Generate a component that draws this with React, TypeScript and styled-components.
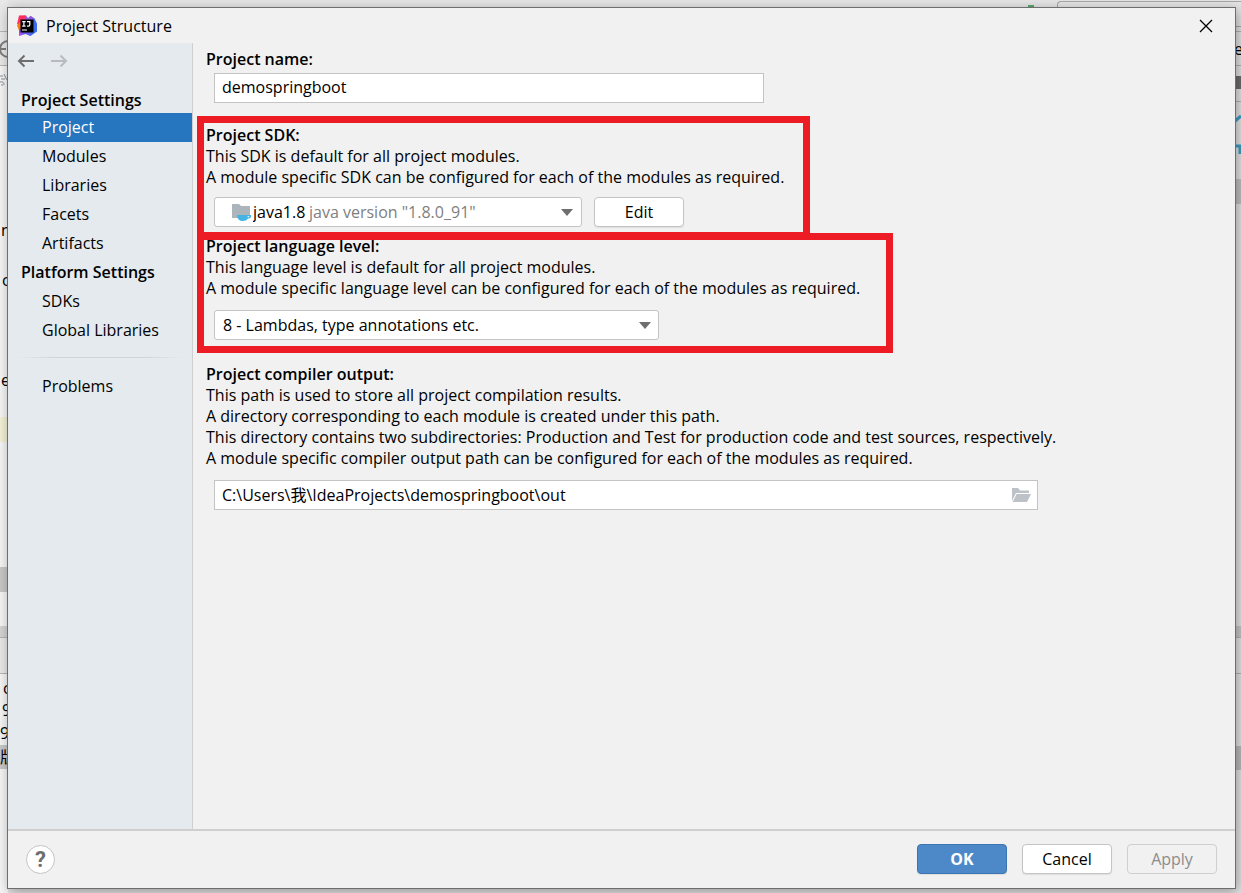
import React from 'react';
import styled, { createGlobalStyle, css } from 'styled-components';

const GlobalStyle = createGlobalStyle`
  * { box-sizing: border-box; }
  body { margin: 0; }
  body, button, input, select {
    font-family: "Open Sans", "Noto Sans CJK SC", sans-serif;
    font-size: 16px;
    color: #000;
  }
`;

const Desktop = styled.div`
  position: relative;
  display: flex;
  min-height: 100vh;
  padding: 7px 5px 4px 7px;
  background: #e6e6e6;
  overflow: hidden;
`;

/* The IDE window that stays visible behind the dialog's edges */
const Backdrop = styled.div`
  position: absolute;
  inset: 0;
  display: flex;
  justify-content: space-between;
`;

const BackTop = styled.div`
  position: absolute;
  top: 1px;
  right: 0;
  width: 184px;
  height: 26px;
  border: 1px solid #a8a8a8;
  border-right: 0;
  border-radius: 4px 0 0 4px;
`;

const RunMark = styled.div`
  position: absolute;
  top: 5px;
  left: 1028px;
  width: 6px;
  height: 3px;
  background: #59a869;
`;

const Strip = styled.div<{ $tone: string }>`
  display: flex;
  flex-direction: column;
  width: 8px;
  background: ${p => p.$tone};
`;

const Slab = styled.div<{ $h: number; $bg?: string; $line?: boolean; $ink?: string; $pad?: number }>`
  display: flex;
  flex: none;
  align-items: center;
  height: ${p => p.$h}px;
  padding-left: ${p => p.$pad || 0}px;
  line-height: 20px;
  white-space: nowrap;
  color: ${p => p.$ink || '#000'};
  background: ${p => p.$bg || 'transparent'};
  border-bottom: ${p => (p.$line ? '1px solid #b5b5b5' : '0')};

  svg { flex: none; }
`;

const Dialog = styled.div`
  position: relative;
  display: flex;
  flex: 1;
  flex-direction: column;
  min-width: 0;
  border: 1px solid #6e6e6e;
  background: #f1f1f1;
  box-shadow: 2px 3px 12px rgba(0, 0, 0, 0.35);
`;

const TitleBar = styled.header`
  display: flex;
  align-items: center;
  height: 35px;
  padding: 0 20px 0 8px;
`;

const Title = styled.h1`
  flex: 1;
  margin: 0 0 0 8px;
  font-size: 16px;
  font-weight: 400;
  line-height: 20px;
`;

const IconButton = styled.button`
  display: flex;
  align-items: center;
  justify-content: center;
  padding: 0;
  border: 0;
  background: transparent;
`;

const Body = styled.div`
  display: flex;
  flex: 1;
`;

const Sidebar = styled.nav`
  flex: none;
  width: 185px;
  border-right: 1px solid #cfcfcf;
  background: #e5eaee;
`;

const History = styled.div`
  display: flex;
  gap: 15px;
  height: 36px;
  padding-left: 9px;
  align-items: center;
`;

const GroupTitle = styled.h2<{ $first?: boolean }>`
  margin: ${p => (p.$first ? '8px' : '0')} 0 0;
  padding-left: 13px;
  font-size: 16px;
  font-weight: 600;
  line-height: ${p => (p.$first ? '26px' : '29px')};
`;

const NavItem = styled.a<{ $active?: boolean }>`
  display: block;
  padding-left: 34px;
  line-height: 29px;
  text-decoration: none;
  color: ${p => (p.$active ? '#fff' : '#000')};
  background: ${p => (p.$active ? '#2675bf' : 'transparent')};
`;

const Divider = styled.hr`
  height: 1px;
  margin: 12px 8px 14px;
  border: 0;
  background: linear-gradient(90deg, transparent, #d0d4d8 25%, #d0d4d8 75%, transparent);
`;

const Main = styled.main`
  display: flex;
  flex: 1;
  flex-direction: column;
  min-width: 0;
  padding: 6px 13px;
`;

const Section = styled.section<{ $after?: number }>`
  position: relative;
  margin-bottom: ${p => p.$after || 0}px;
  line-height: 21px;
`;

const SectionTitle = styled.label`
  display: block;
  font-weight: 600;
`;

const Line = styled.p`
  margin: 0;
`;

const Controls = styled.div<{ $gap: number }>`
  display: flex;
  gap: 12px;
  margin-top: ${p => p.$gap}px;
  padding-left: 8px;
`;

/* Red marker drawn on top of a section */
const Marker = styled.div<{ $w: number; $top: number; $bottom: number }>`
  position: absolute;
  top: ${p => p.$top}px;
  bottom: ${p => p.$bottom}px;
  left: -9px;
  width: ${p => p.$w}px;
  border: 7px solid #ed1c24;
  pointer-events: none;
`;

const Field = styled.div<{ $w: number }>`
  position: relative;
  display: flex;
  width: ${p => p.$w}px;
  height: 30px;
`;

const TextInput = styled.input`
  width: 100%;
  height: 100%;
  padding: 0 36px 2px 7px;
  border: 1px solid #c4c4c4;
  border-radius: 0;
  background: #fff;
  outline: 0;
`;

const Select = styled.select<{ $icon?: boolean }>`
  appearance: none;
  width: 100%;
  height: 100%;
  padding: 0 32px 0 ${p => (p.$icon ? 38 : 8)}px;
  border: 1px solid #c4c4c4;
  border-radius: 3px;
  background: #fff;
  outline: 0;
`;

const Overlay = styled.div<{ $left?: number; $right?: number }>`
  position: absolute;
  top: 0;
  bottom: 0;
  ${p => (p.$left !== undefined ? css`left: ${p.$left}px;` : css`right: ${p.$right}px;`)}
  display: flex;
  align-items: center;
  color: #808080;
  white-space: nowrap;
  pointer-events: none;
`;

const Button = styled.button<{ $kind?: 'primary' | 'disabled' }>`
  width: 90px;
  height: 30px;
  padding: 0;
  border: 1px solid #c4c4c4;
  border-radius: 4px;
  background: #fff;
  box-shadow: 0 1px 1px rgba(0, 0, 0, 0.08);
  ${p => p.$kind === 'primary' && css`
    border-color: #3d75b2;
    background: #4d89c9;
    color: #fff;
    font-weight: 700;
  `}
  ${p => p.$kind === 'disabled' && css`
    border-color: #cfcfcf;
    background: #f1f1f1;
    color: #8c8c8c;
    box-shadow: none;
  `}
`;

const Footer = styled.footer`
  display: flex;
  align-items: center;
  gap: 15px;
  height: 59px;
  padding: 0 18px 1px;
  border-top: 2px solid #cfcfcf;
`;

const HelpButton = styled.button`
  display: flex;
  align-items: center;
  justify-content: center;
  width: 29px;
  height: 29px;
  margin-right: auto;
  padding: 0;
  border: 1px solid #c4c4c4;
  border-radius: 50%;
  background: #fff;
  color: #6e6e6e;
  font-family: Roboto, sans-serif;
  font-size: 22px;
  font-weight: 700;
`;

const Logo = () => (
  <svg width="22" height="22" viewBox="0 0 22 22" aria-hidden="true">
    <path d="M3 .5 9.500 .2 12 4v8H3L1.200 8.500z" fill="#fe315d" />
    <path d="M1 10.500 4 7l2 9-3-.5z" fill="#f97a12" />
    <path d="M3 13.500 9 15l-2.500 5L3 21z" fill="#a84af0" />
    <path d="M12 5 14 1l4.500 2.500L21 8.500v8L14.500 21 9 18z" fill="#3b6cf0" />
    <path d="M9.500 .2 12 3l3-2 3.500 2.500-3 4-6-1z" fill="#8f57e0" />
    <path d="M6 16h8l.5 5-5-2-3 1z" fill="#6a5cf0" />
    <rect x="4.500" y="4.500" width="13" height="13" fill="#000" />
    <path d="M6.200 6.600h3.400M7.900 6.600v4.600M6.200 11.200h3.400M11 6.600h2.800v3.200q0 1.400-1.300 1.400H11" fill="none" stroke="#fff" strokeWidth="1.200" />
    <path d="M6 15h5" stroke="#fff" strokeWidth="1" />
  </svg>
);

const Arrow = ({ flip, color }: { flip?: boolean; color: string }) => (
  <svg width="18" height="14" viewBox="0 0 18 14" aria-hidden="true">
    <path
      d={flip ? 'M1 7h15M10.500 1.500 16 7l-5.500 5.500' : 'M17 7H2M7.500 1.500 2 7l5.500 5.500'}
      fill="none" stroke={color} strokeWidth="2"
    />
  </svg>
);

const Triangle = () => (
  <svg width="12" height="7" viewBox="0 0 12 7" aria-hidden="true">
    <path d="M0 0h12L6 7z" fill="#6e6e6e" />
  </svg>
);

const SdkIcon = () => (
  <svg width="20" height="18" viewBox="0 0 20 18" aria-hidden="true">
    <path d="M0 1h7l2 2h9v9H6v3H0z" fill="#adb5bc" />
    <path d="M5 12h14v1.500q0 2-3 2-1.500 2.500-5.500 2.500Q5.500 18 5 12z" fill="#45b4e3" />
    <path d="M15.500 13.200h2q.3 1-1.600 1.200z" fill="#fff" />
  </svg>
);

const FolderIcon = () => (
  <svg width="20" height="15" viewBox="0 0 20 15" aria-hidden="true">
    <path d="M0 0h6l2 2.500h9V5H4L0 13z" fill="#bcc2c7" />
    <path d="M4.600 6H19l-4 8H0.600z" fill="#bcc2c7" />
  </svg>
);

const TargetIcon = () => (
  <svg width="16" height="18" viewBox="0 0 16 18" aria-hidden="true">
    <path d="M8 1a8 8 0 1 0 0 16 8 8 0 1 0 0-16M0 9h6M8 1v5M8 12v5" fill="none" stroke="#7d7d7d" strokeWidth="2" />
  </svg>
);

const BranchIcon = () => (
  <svg width="12" height="16" viewBox="0 0 12 16" aria-hidden="true">
    <path d="M0 4h3M1 7h4M0 10q4-1 4 3M4 2l3 6M1 13h2" fill="none" stroke="#8a8f96" strokeWidth="1" />
  </svg>
);

const EdgeIcon = ({ d }: { d: string }) => (
  <svg width="8" height="12" viewBox="0 0 8 12" aria-hidden="true">
    <path d={d} fill="none" stroke="#3e9fc4" strokeWidth="3" />
  </svg>
);

const settings = ['Modules', 'Libraries', 'Facets', 'Artifacts'];

export default function App() {
  return (
    <Desktop>
      <GlobalStyle />
      <Backdrop aria-hidden="true">
        <Strip $tone="#f6f6f6">
          <Slab $h={32} $bg="#e9e9e9" $line />
          <Slab $h={34} $bg="#e9e9e9" $line><TargetIcon /></Slab>
          <Slab $h={28}><BranchIcon /></Slab>
          <Slab $h={126} />
          <Slab $h={20} $pad={1}>n</Slab>
          <Slab $h={30} />
          <Slab $h={20} $pad={2}>c</Slab>
          <Slab $h={80} />
          <Slab $h={20} $pad={1}>e</Slab>
          <Slab $h={27} />
          <Slab $h={25} $bg="#f3f2d6" />
          <Slab $h={125} />
          <Slab $h={25} $bg="#c8c8c8" />
          <Slab $h={34} />
          <Slab $h={12} $bg="#d4d4d4" $line />
          <Slab $h={36} $bg="#e9e9e9" $line />
          <Slab $h={3} />
          <Slab $h={22} $pad={3}>c</Slab>
          <Slab $h={22} $pad={2}>9</Slab>
          <Slab $h={24}>9</Slab>
          <Slab $h={24} $bg="#c8c8c8">版</Slab>
        </Strip>
        <BackTop />
        <RunMark />
        <Strip $tone="#e6e6e6">
          <Slab $h={32} $line />
          <Slab $h={34} $line $pad={1}>e</Slab>
          <Slab $h={10} />
          <Slab $h={13} $bg="#6e6e6e" />
          <Slab $h={13} $line />
          <Slab $h={9} />
          <Slab $h={12}><EdgeIcon d="M1 11 8 5" /></Slab>
          <Slab $h={20} />
          <Slab $h={12}><EdgeIcon d="M3 3h4v8" /></Slab>
          <Slab $h={24} />
          <Slab $h={25} $bg="#c2c2c2" />
          <Slab $h={422} />
          <Slab $h={12} $bg="#cacaca" $line />
          <Slab $h={36} $line />
          <Slab $h={72} />
          <Slab $h={24} $bg="#bebebe" />
        </Strip>
      </Backdrop>

      <Dialog role="dialog" aria-label="Project Structure">
        <TitleBar>
          <Logo />
          <Title>Project Structure</Title>
          <IconButton aria-label="Close">
            <svg width="18" height="14" viewBox="0 0 18 14" aria-hidden="true">
              <path d="M3 1l12 12M15 1 3 13" stroke="#000" strokeWidth="1.300" />
            </svg>
          </IconButton>
        </TitleBar>

        <Body>
          <Sidebar>
            <History>
              <IconButton aria-label="Back"><Arrow color="#6e6e6e" /></IconButton>
              <IconButton aria-label="Forward" disabled><Arrow flip color="#b9bcbf" /></IconButton>
            </History>
            <GroupTitle $first>Project Settings</GroupTitle>
            <NavItem href="#project" $active>Project</NavItem>
            {settings.map(name => (
              <NavItem key={name} href={`#${name.toLowerCase()}`}>{name}</NavItem>
            ))}
            <GroupTitle>Platform Settings</GroupTitle>
            <NavItem href="#sdks">SDKs</NavItem>
            <NavItem href="#global-libraries">Global Libraries</NavItem>
            <Divider />
            <NavItem href="#problems">Problems</NavItem>
          </Sidebar>

          <Main>
            <Section $after={22}>
              <SectionTitle htmlFor="name">Project name:</SectionTitle>
              <Controls $gap={3}>
                <Field $w={550}><TextInput id="name" defaultValue="demospringboot" /></Field>
              </Controls>
            </Section>

            <Section $after={9}>
              <SectionTitle htmlFor="sdk">Project SDK:</SectionTitle>
              <Line>This SDK is default for all project modules.</Line>
              <Line>A module specific SDK can be configured for each of the modules as required.</Line>
              <Controls $gap={9}>
                <Field $w={368}>
                  <Select id="sdk" $icon><option>java1.8</option></Select>
                  <Overlay $left={18}><SdkIcon /></Overlay>
                  <Overlay $left={95}>java version "1.8.0_91"</Overlay>
                  <Overlay $right={9}><Triangle /></Overlay>
                </Field>
                <Button>Edit</Button>
              </Controls>
              <Marker $w={613} $top={-9} $bottom={-12} />
            </Section>

            <Section $after={24}>
              <SectionTitle htmlFor="level">Project language level:</SectionTitle>
              <Line>This language level is default for all project modules.</Line>
              <Line>A module specific language level can be configured for each of the modules as required.</Line>
              <Controls $gap={11}>
                <Field $w={445}>
                  <Select id="level"><option>8 - Lambdas, type annotations etc.</option></Select>
                  <Overlay $right={8}><Triangle /></Overlay>
                </Field>
              </Controls>
              <Marker $w={696} $top={-3} $bottom={-13} />
            </Section>

            <Section>
              <SectionTitle htmlFor="output">Project compiler output:</SectionTitle>
              <Line>This path is used to store all project compilation results.</Line>
              <Line>A directory corresponding to each module is created under this path.</Line>
              <Line>This directory contains two subdirectories: Production and Test for production code and test sources, respectively.</Line>
              <Line>A module specific compiler output path can be configured for each of the modules as required.</Line>
              <Controls $gap={11}>
                <Field $w={824}>
                  <TextInput id="output" defaultValue={'C:\\Users\\我\\IdeaProjects\\demospringboot\\out'} />
                  <Overlay $right={6}><FolderIcon /></Overlay>
                </Field>
              </Controls>
            </Section>
          </Main>
        </Body>

        <Footer>
          <HelpButton aria-label="Help">?</HelpButton>
          <Button $kind="primary">OK</Button>
          <Button>Cancel</Button>
          <Button $kind="disabled" disabled>Apply</Button>
        </Footer>
      </Dialog>
    </Desktop>
  );
}
